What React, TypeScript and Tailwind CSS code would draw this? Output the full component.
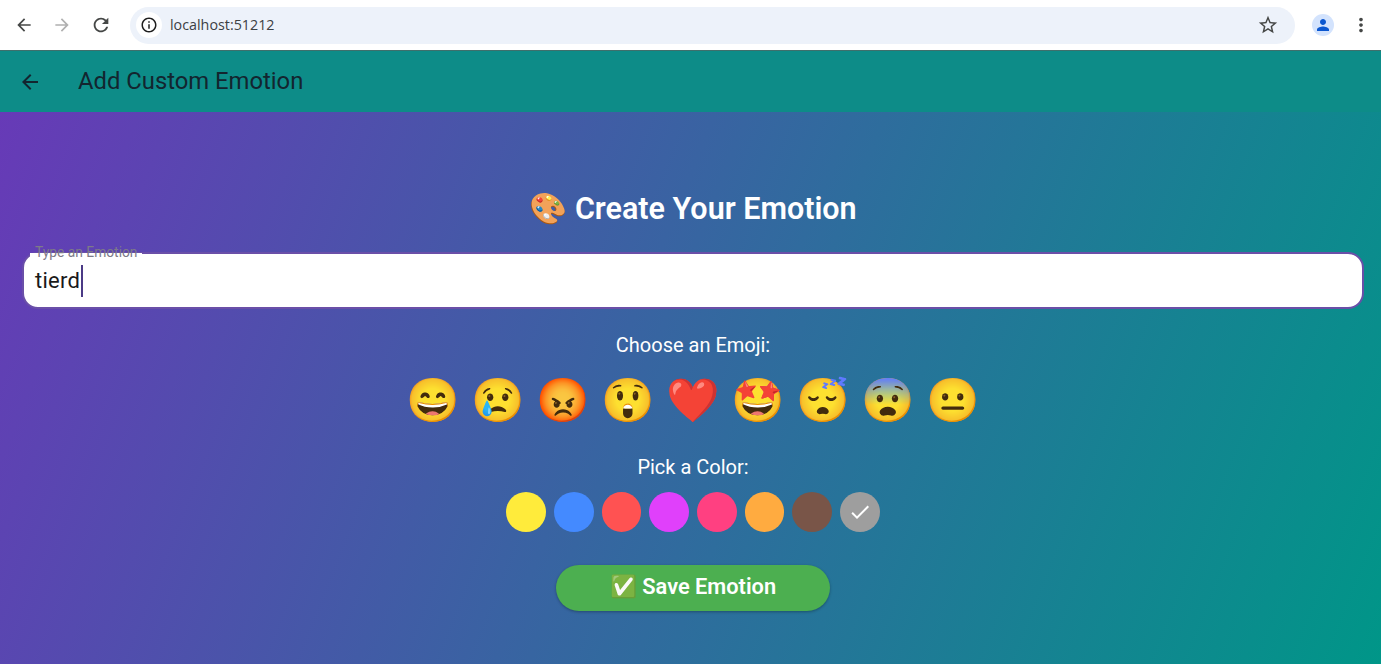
import React from "react";
import { MdArrowBack, MdArrowForward, MdRefresh, MdInfoOutline, MdStarBorder, MdPerson, MdMoreVert, MdCheck } from "react-icons/md";

const emojis = ["😄", "😢", "😡", "😲", "❤️", "🤩", "😴", "😨", "😐"];
const colors = ["bg-[#ffeb3b]", "bg-[#448aff]", "bg-[#ff5252]", "bg-[#e040fb]", "bg-[#ff4081]", "bg-[#ffab40]", "bg-[#795548]", "bg-[#9e9e9e]"];

const BrowserBar = () => (
  <div className="h-[51px] bg-white flex items-center border-b border-[#3f6f6c] font-['Open_Sans',sans-serif]">
    <div className="flex items-center gap-[18px] pl-[14px] text-[#454746]">
      <MdArrowBack size={20} />
      <MdArrowForward size={20} className="text-[#b0b0b0]" />
      <MdRefresh size={22} />
    </div>
    <div className="ml-[18px] h-[37px] flex-1 rounded-full bg-[#edf2fa] flex items-center pl-[6px] pr-[16px]">
      <div className="w-[26px] h-[26px] rounded-full bg-white flex items-center justify-center text-[#1f1f1f]">
        <MdInfoOutline size={18} />
      </div>
      <span className="ml-[8px] text-[14.3px] text-[#3c4043]">localhost:51212</span>
      <MdStarBorder size={22} className="ml-auto text-[#454746]" />
    </div>
    <div className="ml-[17px] w-[22px] h-[22px] rounded-full bg-[#d3e3fd] flex items-center justify-center text-[#0b57d0]">
      <MdPerson size={18} />
    </div>
    <MdMoreVert size={22} className="ml-[16px] mr-[9px] text-[#454746]" />
  </div>
);

export default function App() {
  return (
    <div className="w-[1381px] h-[664px] overflow-hidden flex flex-col font-['Roboto',sans-serif]">
      <BrowserBar />
      <div className="h-[61px] bg-[#0d8c88] flex items-center text-[#13252f]">
        <MdArrowBack size={24} className="ml-[18px]" />
        <span className="ml-[36px] text-[23.8px]">Add Custom Emotion</span>
      </div>
      <div className="flex-1 flex flex-col items-center pl-[22px] pr-[17px] bg-[linear-gradient(111.8deg,#673ab7,#009688)]">
        <h1 className="mt-[77px] h-[40px] leading-[40px] text-[30.5px] font-semibold text-white">🎨 Create Your Emotion</h1>
        <div className="relative mt-[23px] w-full h-[57px] bg-white rounded-[16px] border-2 border-[#6a4fa8] flex items-center pl-[11px]">
          <span className="absolute left-[6px] -top-[9px] px-[5px] bg-[linear-gradient(to_bottom,transparent_57%,white_57%)] text-[13.8px] leading-[14px] text-[#7d7a88]">Type an Emotion</span>
          <span className="text-[22px] tracking-[0.25px] text-[#1a1a1a]">tierd</span>
          <span className="ml-[1px] w-[2px] h-[32px] bg-[#4b3a86]" />
        </div>
        <p className="mt-[24px] text-[20px] leading-[24px] text-white">Choose an Emoji:</p>
        <div className="mt-[18px] flex gap-[15px] text-[43px] leading-[50px]">
          {emojis.map((e) => (
            <span key={e} className="w-[50px] flex justify-center">{e}</span>
          ))}
        </div>
        <p className="mt-[30px] text-[20px] leading-[24px] text-white">Pick a Color:</p>
        <div className="mt-[13px] flex gap-[8px]">
          {colors.map((c, i) => (
            <div key={c} className={`w-[39.7px] h-[39.7px] rounded-full flex items-center justify-center text-white ${c}`}>
              {i === 7 && <MdCheck size={24} />}
            </div>
          ))}
        </div>
        <button className="mt-[33px] w-[274px] h-[46px] rounded-full bg-[#4caf50] text-white text-[21.8px] font-semibold shadow-[0_1px_3px_rgba(0,0,0,0.3)]">✅ Save Emotion</button>
      </div>
    </div>
  );
}
